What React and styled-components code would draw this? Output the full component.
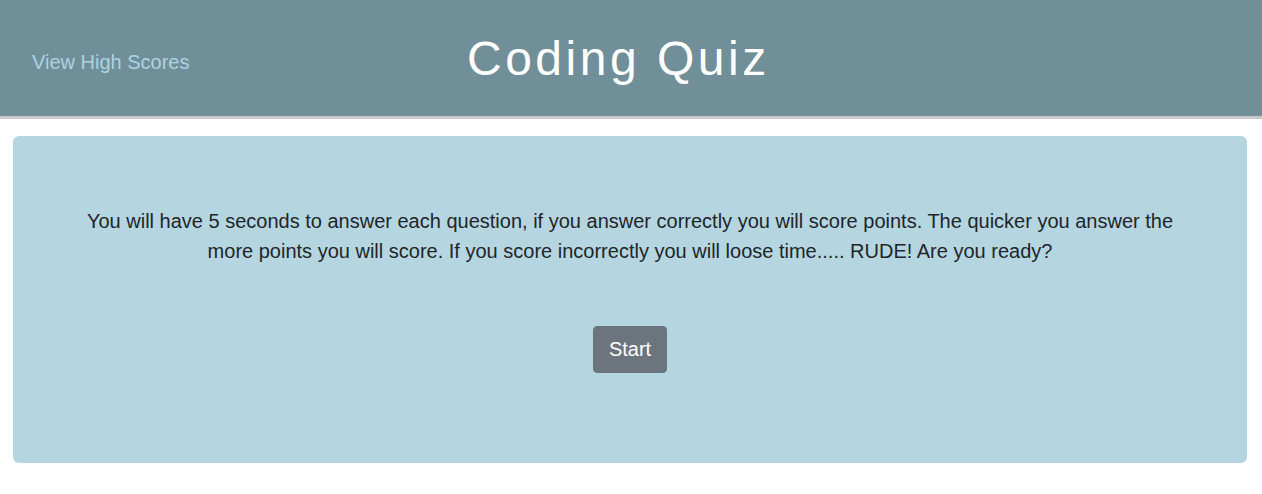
import React from "react";
import styled, { createGlobalStyle } from "styled-components";

const GlobalStyle = createGlobalStyle`
  html, body {
    margin: 0;
    padding: 0;
    background: #ffffff;
    font-family: "Liberation Sans", Arial, sans-serif;
    color: #212529;
  }
`;

const Header = styled.header`
  display: grid;
  grid-template-columns: 435px 1fr;
  align-items: center;
  height: 116px;
  background: #718f98;
  border-bottom: 3px solid #c9c9c9;
`;

const ScoresLink = styled.a`
  padding-left: 32px;
  padding-top: 9px;
  font-size: 20px;
  color: #acd3e2;
  text-decoration: none;
  cursor: pointer;
`;

const Title = styled.h1`
  margin: 0 0 0 32px;
  font-size: 48px;
  font-weight: 400;
  letter-spacing: 3.5px;
  color: #ffffff;
`;

const Main = styled.main`
  padding: 17px 15px 0 13px;
`;

const Card = styled.section`
  display: flex;
  flex-direction: column;
  align-items: center;
  height: 327px;
  box-sizing: border-box;
  padding: 70px 60px 0;
  background: #b5d6e0;
  border-radius: 6px;
`;

const Intro = styled.p`
  margin: 0;
  font-size: 20px;
  line-height: 30px;
  text-align: center;
  color: #212529;
`;

const StartButton = styled.button`
  margin-top: 60px;
  padding: 8px 15px;
  font-family: inherit;
  font-size: 20px;
  line-height: 29px;
  color: #ffffff;
  background: #6c757d;
  border: 1px solid #6c757d;
  border-radius: 4px;
  cursor: pointer;
`;

export default function App() {
  return (
    <>
      <GlobalStyle />
      <Header>
        <ScoresLink href="#">View High Scores</ScoresLink>
        <Title>Coding Quiz</Title>
      </Header>
      <Main>
        <Card>
          <Intro>
            You will have 5 seconds to answer each question, if you answer correctly you will
            score points. The quicker you answer the more points you will score. If you score
            incorrectly you will loose time..... RUDE! Are you ready?
          </Intro>
          <StartButton>Start</StartButton>
        </Card>
      </Main>
    </>
  );
}
